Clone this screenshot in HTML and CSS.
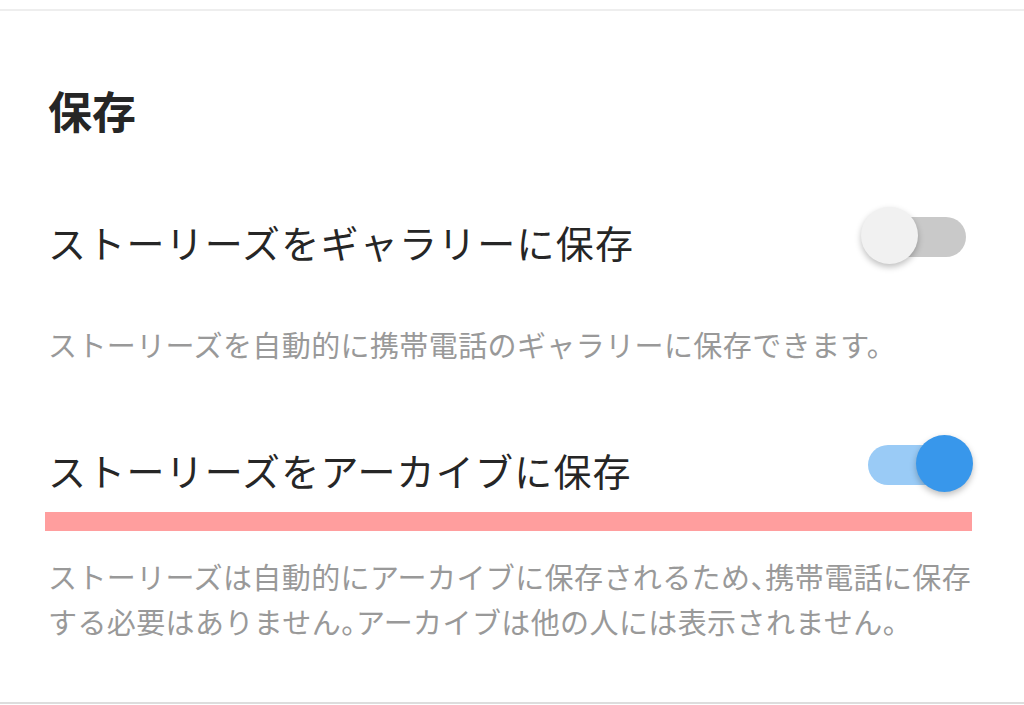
FILE: index.html
```html
<!DOCTYPE html>
<html lang="ja">
<head>
    <meta charset="UTF-8">
    <meta name="viewport" content="width=device-width, initial-scale=1.0">
    <title>保存</title>
    <link rel="stylesheet" href="styles.css">
</head>
<body>
    <div class="rule top"></div>
    <div class="section">
        <h1 class="heading">保存</h1>

        <div class="row first">
            <span class="label">ストーリーズをギャラリーに保存</span>
            <div class="toggle">
                <div class="track"></div>
                <div class="knob"></div>
            </div>
        </div>
        <p class="desc single">ストーリーズを自動的に携帯電話のギャラリーに保存できます。</p>

        <div class="row second">
            <span class="label">ストーリーズをアーカイブに保存</span>
            <div class="toggle on">
                <div class="track"></div>
                <div class="knob"></div>
            </div>
        </div>
        <div class="highlight"></div>
        <p class="desc double">ストーリーズは自動的にアーカイブに保存されるため<span class="punct">、</span>携帯電話に保存<br>する必要はありません<span class="punct">。</span>アーカイブは他の人には表示されません。</p>
    </div>
    <div class="rule bottom"></div>
</body>
</html>
```

FILE: styles.css
```css
body {
    margin: 0;
    padding-top: 9px;
    background: #fff;
    font-family: "Noto Sans CJK JP", "Noto Sans", sans-serif;
    color: #262626;
}
.rule {
    height: 2px;
}
.rule.top {
    background: #eeeeee;
}
.rule.bottom {
    margin-top: 58px;
    background: #dddddd;
}
.section {
    padding: 0 51px 0 48px;
}
.heading {
    margin: 73px 0 0;
    font-size: 44px;
    line-height: 53px;
    font-weight: 700;
}
.row {
    display: flex;
    justify-content: space-between;
    align-items: center;
}
.row.first {
    margin-top: 70px;
}
.row.second {
    margin-top: 68px;
}
.label {
    font-size: 38px;
    line-height: 46px;
    letter-spacing: 1.2px;
}
.desc {
    margin: 0;
    color: #999999;
    font-size: 29px;
    line-height: 45px;
    letter-spacing: 0.4px;
}
.desc.single {
    margin-top: 46px;
}
.desc.double {
    margin-top: 23px;
}
.punct {
    font-feature-settings: "halt";
}
.highlight {
    height: 19px;
    margin: 8px 1px 0 -3px;
    background: #ff9e9e;
}

/* switch */
.toggle {
    position: relative;
    width: 112px;
    height: 57px;
    margin-bottom: 12px;
}
.track {
    position: absolute;
    left: 7px;
    right: 7px;
    top: 10px;
    height: 40px;
    border-radius: 20px;
    background: #c9c9c9;
}
.knob {
    position: absolute;
    top: 0;
    left: 0;
    width: 57px;
    height: 57px;
    border-radius: 50%;
    background: #f1f1f1;
    box-shadow: 0 3px 6px rgba(0, 0, 0, 0.25);
}
.toggle.on .track {
    background: #9acbf6;
}
.toggle.on .knob {
    left: auto;
    right: 0;
    background: #3897eb;
}
```
